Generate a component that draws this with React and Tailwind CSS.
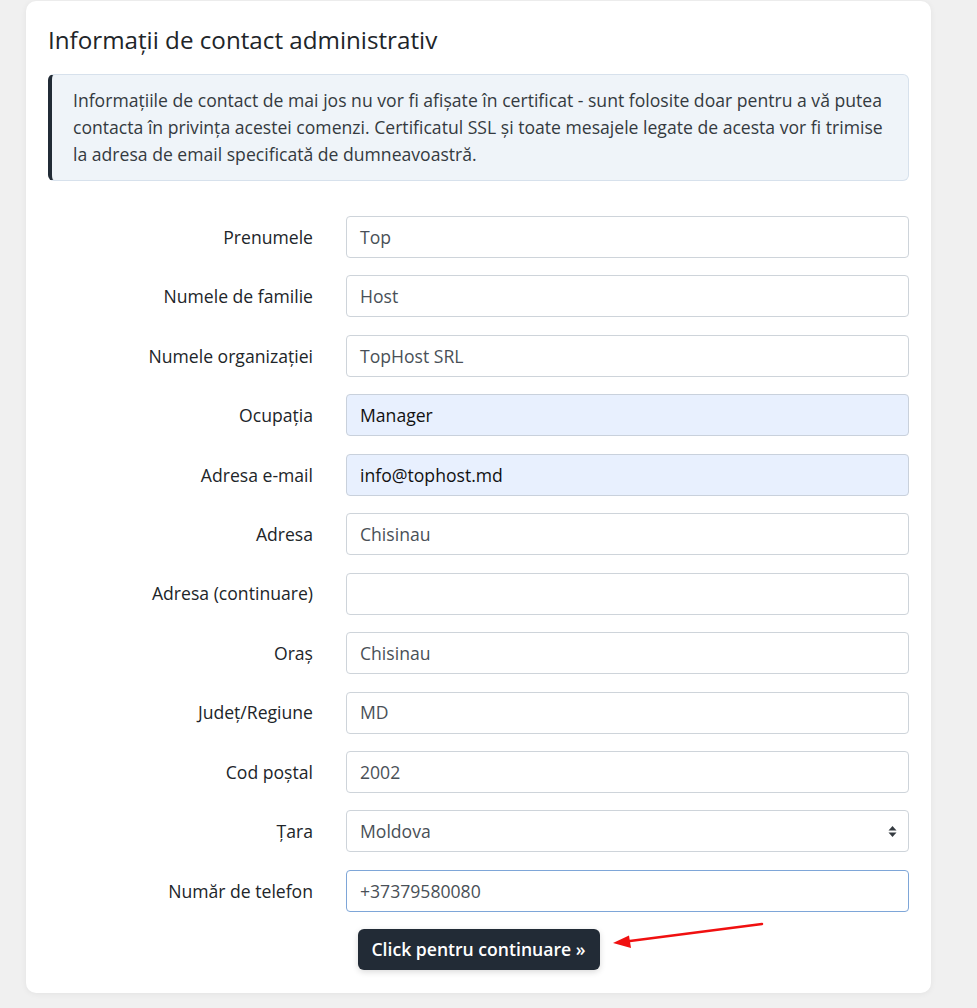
import React from 'react';

const fields = [
  { label: 'Prenumele', value: 'Top' },
  { label: 'Numele de familie', value: 'Host' },
  { label: 'Numele organizației', value: 'TopHost SRL' },
  { label: 'Ocupația', value: 'Manager', autofill: true },
  { label: 'Adresa e-mail', value: 'info@tophost.md', autofill: true },
  { label: 'Adresa', value: 'Chisinau' },
  { label: 'Adresa (continuare)', value: '' },
  { label: 'Oraș', value: 'Chisinau' },
  { label: 'Județ/Regiune', value: 'MD' },
  { label: 'Cod poștal', value: '2002' },
  { label: 'Țara', value: 'Moldova', select: true },
  { label: 'Număr de telefon', value: '+37379580080', focus: true },
];

function Field({ field }) {
  let box = 'bg-white border-[#ced4da] text-[#495057]';
  if (field.autofill) box = 'bg-[#e8f0fe] border-[#c9d1dc] text-[#111]';
  if (field.focus) box = 'bg-white border-[#7ea6d8] text-[#495057]';

  return (
    <div className="flex items-center h-[42px]">
      <div className="w-[265px] text-right text-[17.6px] text-[#212529] shrink-0">{field.label}</div>
      <div className={`ml-[33px] w-[563px] h-[42px] border rounded-[4px] flex items-center justify-between px-[13px] text-[17.6px] ${box}`}>
        <span>{field.value}</span>
        {field.select && (
          <svg width="9" height="13" viewBox="0 0 9 13" className="mr-[-2px]">
            <path d="M4.5 1 L8.5 5.5 L0.5 5.5 Z" fill="#343a40" />
            <path d="M4.5 12 L8.5 7.5 L0.5 7.5 Z" fill="#343a40" />
          </svg>
        )}
      </div>
    </div>
  );
}

export default function App() {
  return (
    <div className="min-h-[1008px] bg-[#f0f0f0] relative" style={{ fontFamily: '"Open Sans", "Noto Sans", sans-serif' }}>
      <div className="ml-[26px] w-[905px] pt-[1px]">
        <div className="bg-white rounded-[10px] shadow-[0_1px_6px_rgba(0,0,0,0.06)] px-[22px] pt-[24px] pb-[23px]">
          <h2 className="text-[24.2px] leading-[29px] text-[#212529] mb-[20px]">Informații de contact administrativ</h2>

          <div className="bg-[#eff4f9] border border-[#d7e1ec] border-l-4 border-l-[#212b36] rounded-[6px] pl-[21px] pr-[20px] py-3 text-[17.6px] leading-[27px] text-[#343a40]">
            Informațiile de contact de mai jos nu vor fi afișate în certificat - sunt folosite doar pentru a vă putea contacta în privința acestei comenzi. Certificatul SSL și toate mesajele legate de acesta vor fi trimise la adresa de email specificată de dumneavoastră.
          </div>

          <div className="mt-[35px] flex flex-col gap-[17.45px]">
            {fields.map((f) => (
              <Field key={f.label} field={f} />
            ))}
          </div>

          <div className="mt-[17px] flex justify-center">
            <button className="w-[242px] h-[41px] rounded-[6px] bg-[#222b36] text-white text-[17.6px] font-semibold shadow-[0_2px_6px_rgba(0,0,0,0.15)]">
              Click pentru continuare »
            </button>
          </div>
        </div>
      </div>

      <svg className="absolute left-[600px] top-[915px]" width="180" height="40" viewBox="0 0 180 40">
        <line x1="162" y1="9" x2="26" y2="26.5" stroke="#f01010" strokeWidth="2.5" strokeLinecap="round" />
        <path d="M13 28 L29 20.5 L31 33 Z" fill="#f01010" />
      </svg>
    </div>
  );
}
